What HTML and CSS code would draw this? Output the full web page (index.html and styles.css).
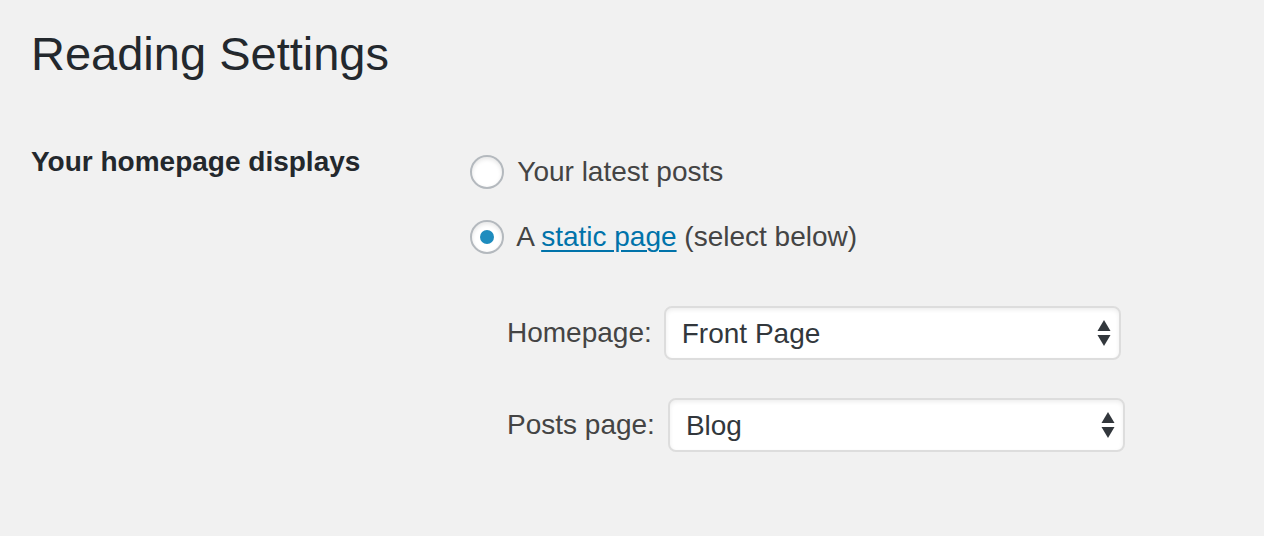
FILE: index.html
```html
<!DOCTYPE html>
<html>
<head>
<meta charset="utf-8">
<link rel="stylesheet" href="styles.css">
</head>
<body>
<div class="wrap">
  <h1 class="title">Reading Settings</h1>
  <div class="row">
    <div class="th">Your homepage displays</div>
    <div class="td">
      <label class="opt"><input type="radio" name="show" class="radio"> Your latest posts</label>
      <label class="opt opt2"><input type="radio" name="show" class="radio" checked> A <a href="#" class="link">static page</a> (select below)</label>
      <div class="pages">
        <div class="field">
          <span class="flabel">Homepage:</span>
          <div class="selwrap">
            <select class="sel"><option>Front Page</option></select>
            <svg class="arrows" width="14" height="26" viewBox="0 0 14 26"><path d="M7 0 L13.5 11 L0.5 11 Z" fill="#32373c"/><path d="M0.5 15 L13.5 15 L7 26 Z" fill="#32373c"/></svg>
          </div>
        </div>
        <div class="field field2">
          <span class="flabel flabel2">Posts page:</span>
          <div class="selwrap">
            <select class="sel"><option>Blog</option></select>
            <svg class="arrows" width="14" height="26" viewBox="0 0 14 26"><path d="M7 0 L13.5 11 L0.5 11 Z" fill="#32373c"/><path d="M0.5 15 L13.5 15 L7 26 Z" fill="#32373c"/></svg>
          </div>
        </div>
      </div>
    </div>
  </div>
</div>
</body>
</html>
```
FILE: styles.css
```css
html, body {
  margin: 0;
  padding: 0;
  background: #f1f1f1;
  font-family: "Liberation Sans", Arial, sans-serif;
  color: #444;
}
.wrap {
  padding: 0 0 0 31px;
}
.title {
  margin: 0;
  padding-top: 25px;
  font-size: 47px;
  line-height: 58px;
  font-weight: 400;
  color: #23282d;
}
.row {
  display: flex;
  margin-top: 59px;
}
.th {
  width: 439px;
  flex: none;
  font-size: 28px;
  font-weight: 700;
  color: #23282d;
  line-height: 40px;
}
.td {
  display: flex;
  flex-direction: column;
  margin-top: 10px;
}
.opt {
  display: flex;
  align-items: center;
  font-size: 28px;
  line-height: 40px;
  color: #444;
  white-space: pre;
}
.opt2 {
  margin-top: 25px;
}
.radio {
  appearance: none;
  -webkit-appearance: none;
  width: 34px;
  height: 34px;
  margin: 0 6px 0 0;
  border: 2px solid #b4b9be;
  border-radius: 50%;
  background: #fff;
  box-shadow: inset 0 2px 4px rgba(0,0,0,0.1);
  box-sizing: border-box;
  position: relative;
  flex: none;
}
.radio:checked::before {
  content: "";
  position: absolute;
  left: 8px;
  top: 8px;
  width: 14px;
  height: 14px;
  border-radius: 50%;
  background: #1e8cbe;
}
.link {
  color: #0073aa;
  text-decoration: underline;
  text-decoration-thickness: 2px;
  text-underline-offset: 4px;
}
.pages {
  display: flex;
  flex-direction: column;
  padding-left: 37px;
  margin-top: 49px;
}
.field {
  display: flex;
  align-items: center;
}
.field2 {
  margin-top: 38px;
}
.flabel {
  font-size: 28px;
  color: #444;
  margin-right: 12px;
}
.flabel2 {
  margin-right: 13px;
}
.selwrap {
  position: relative;
}
.sel {
  appearance: none;
  -webkit-appearance: none;
  width: 457px;
  height: 54px;
  border: 2px solid #ddd;
  border-radius: 8px;
  background: #fff;
  box-shadow: inset 0 2px 4px rgba(0,0,0,0.07);
  font-family: "Liberation Sans", Arial, sans-serif;
  font-size: 28px;
  color: #32373c;
  padding: 0 16px;
  display: block;
}
.arrows {
  position: absolute;
  right: 10px;
  top: 14px;
}
```
